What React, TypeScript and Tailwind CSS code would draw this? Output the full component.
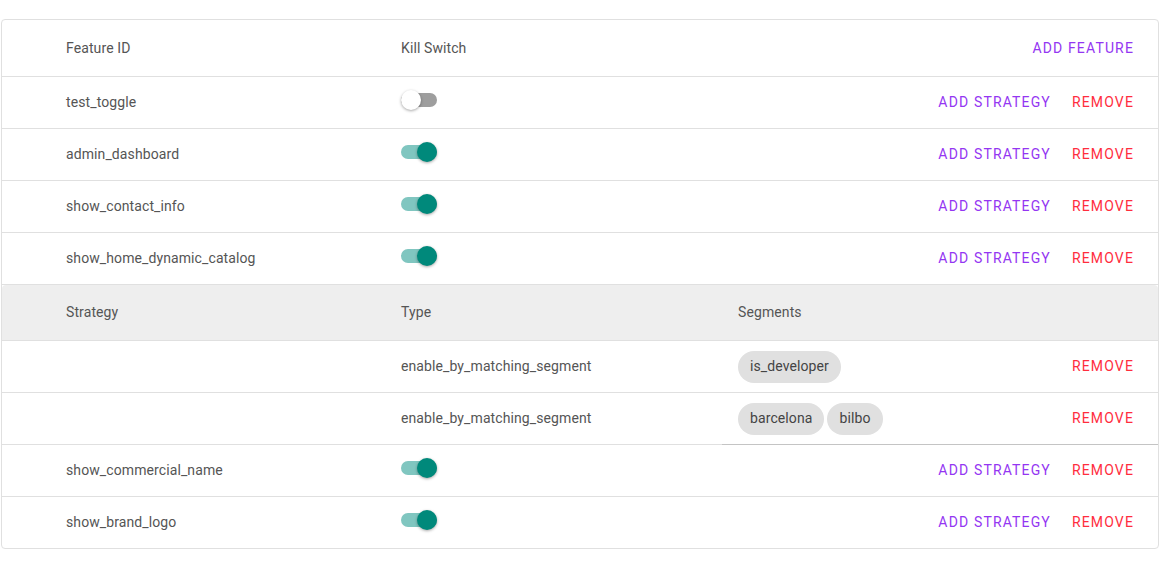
import React from "react";

const features = [
  { id: "test_toggle", on: false },
  { id: "admin_dashboard", on: true },
  { id: "show_contact_info", on: true },
  { id: "show_home_dynamic_catalog", on: true, strategies: [
    { type: "enable_by_matching_segment", segments: ["is_developer"] },
    { type: "enable_by_matching_segment", segments: ["barcelona", "bilbo"] },
  ] },
  { id: "show_commercial_name", on: true },
  { id: "show_brand_logo", on: true },
];

function Toggle({ on }: { on: boolean }) {
  return (
    <div className="relative w-[36px] h-[20px] mb-[5px] flex items-center">
      <div className={`w-[36px] h-[14px] rounded-full ${on ? "bg-[#80c6c0]" : "bg-[#9e9e9e]"}`} />
      <div
        className={`absolute top-0 w-[20px] h-[20px] rounded-full shadow-[0_1px_3px_rgba(0,0,0,0.35)] ${on ? "left-[16px] bg-[#00897b]" : "left-0 bg-white"}`}
      />
    </div>
  );
}

const btn = "text-[14px] tracking-[1.15px] uppercase leading-none";
const purple = "text-[#9436f2]";
const red = "text-[#ff2d3d]";

export default function App() {
  return (
    <div className="pt-[19px] pl-[1px] font-['Roboto',sans-serif] text-[14px] tracking-[0.1px] text-[#555] bg-white min-h-[581px]">
      <div className="w-[1158px] border border-[#e0e0e0] rounded-[4px] overflow-hidden">
        <div className="flex items-center h-[57px] border-b border-[#e0e0e0]">
          <div className="w-[399px] pl-[64px]">Feature ID</div>
          <div className="w-[321px]">Kill Switch</div>
          <div className="flex-1 flex justify-end pr-[24px]">
            <span className={`${btn} ${purple}`}>Add Feature</span>
          </div>
        </div>
        {features.map((f, i) => (
          <React.Fragment key={f.id}>
            <div className={`flex items-center ${i === features.length - 1 ? "h-[51px]" : "h-[52px] border-b border-[#e0e0e0]"}`}>
              <div className="w-[399px] pl-[64px]">{f.id}</div>
              <div className="w-[321px]"><Toggle on={f.on} /></div>
              <div className="flex-1 flex justify-end items-center gap-[21px] pr-[24px] mb-[2px]">
                <span className={`${btn} ${purple}`}>Add Strategy</span>
                <span className={`${btn} ${red}`}>Remove</span>
              </div>
            </div>
            {f.strategies && (
              <div>
                <div className="flex items-center h-[56px] bg-[#eeeeee] rounded-t-[4px] border-b border-[#e0e0e0]">
                  <div className="w-[399px] pl-[64px]">Strategy</div>
                  <div className="w-[321px]">Type</div>
                  <div className="pl-[16px]">Segments</div>
                </div>
                {f.strategies.map((s, j) => {
                  const last = j === f.strategies!.length - 1;
                  return (
                    <div key={j} className="flex items-stretch h-[52px]">
                      <div className="w-[399px] border-b border-[#e0e0e0]" />
                      <div className="w-[321px] flex items-center border-b border-[#e0e0e0]">{s.type}</div>
                      <div className={`flex-1 flex items-center pl-[16px] pr-[24px] border-b ${last ? "border-[#c4c4c4]" : "border-[#e0e0e0]"}`}>
                        <div className="flex gap-[3px]">
                          {s.segments.map((seg) => (
                            <span key={seg} className="h-[32px] px-[12px] rounded-full bg-[#e0e0e0] text-[#444] flex items-center">{seg}</span>
                          ))}
                        </div>
                        <span className={`${btn} ${red} ml-auto mb-[2px]`}>Remove</span>
                      </div>
                    </div>
                  );
                })}
              </div>
            )}
          </React.Fragment>
        ))}
      </div>
    </div>
  );
}
